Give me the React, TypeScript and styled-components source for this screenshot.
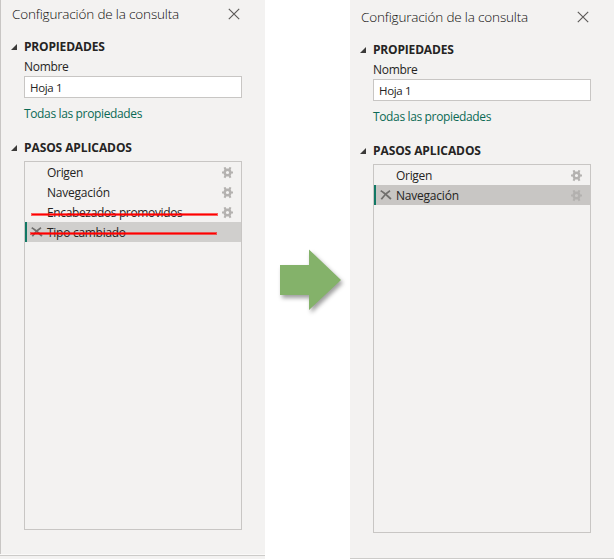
import React from 'react';
import styled, { createGlobalStyle } from 'styled-components';

const GlobalStyle = createGlobalStyle`
  * { box-sizing: border-box; }
  body {
    margin: 0;
    background: #fff;
    font-family: 'Open Sans', 'Noto Sans', sans-serif;
    font-size: 12px;
    color: #252423;
    overflow: hidden;
  }
`;

const Page = styled.main`
  display: grid;
  grid-template-columns: 265px 85px 264px;
  width: 615px;
  height: 559px;
  overflow: hidden;
`;

const PanelColumn = styled.div<{ $outlined?: boolean }>`
  display: flex;
  flex-direction: column;
  height: 559px;
  background: ${p => (p.$outlined ? '#f3f2f1' : '#fff')};
`;

const Panel = styled.section<{ $outlined?: boolean }>`
  height: ${p => (p.$outlined ? 554 : 558)}px;
  padding: ${p => (p.$outlined ? '0 23px 0 23px' : '3px 23px 0 23px')};
  border-left: ${p => (p.$outlined ? '1px solid #c8c6c4' : '0')};
  background: #f3f2f1;
`;

const BottomRule = styled.div<{ $gap?: boolean }>`
  height: ${p => (p.$gap ? 2 : 1)}px;
  border-top: ${p => (p.$gap ? '1px solid #faf9f8' : '0')};
  background: #cccbc9;
`;

const Header = styled.header`
  display: flex;
  align-items: center;
  justify-content: space-between;
  height: 28px;
  margin-left: -12px;
  padding-right: 2px;
`;

const Title = styled.h1`
  margin: 0;
  font-size: 13.5px;
  font-weight: 300;
  line-height: 28px;
  letter-spacing: -0.16px;
  color: #100f0e;
  white-space: nowrap;
`;

const Heading = styled.h2<{ $top: number; $spacing: number }>`
  position: relative;
  margin: ${p => p.$top}px 0 0;
  height: 20px;
  font-size: 12px;
  line-height: 20px;
  font-weight: 700;
  letter-spacing: ${p => p.$spacing}px;
  color: #252423;
  white-space: nowrap;
`;

const Caret = styled.svg`
  position: absolute;
  left: -13px;
  top: 7px;
`;

const Label = styled.label`
  display: block;
  height: 19px;
  line-height: 20px;
  letter-spacing: -0.3px;
`;

const NameField = styled.div`
  height: 22px;
  padding-left: 5px;
  border: 1px solid #c8c6c4;
  background: #fff;
  line-height: 21px;
  font-size: 11.5px;
  letter-spacing: -0.35px;
`;

const AllLink = styled.a`
  display: block;
  height: 20px;
  margin-top: 6px;
  line-height: 20px;
  letter-spacing: -0.36px;
  color: #0b6a55;
`;

const StepList = styled.ul`
  height: 369px;
  margin: 3px 0 0;
  padding: 0;
  border: 1px solid #c8c6c4;
  list-style: none;
`;

const Step = styled.li<{ $fill?: string }>`
  position: relative;
  display: grid;
  grid-template-columns: 20px 1fr 12px;
  align-items: center;
  height: 20px;
  padding-right: 7px;
  border-left: 2px solid ${p => (p.$fill ? '#117865' : 'transparent')};
  background: ${p => p.$fill ?? 'transparent'};
  background-clip: padding-box;
`;

const StepName = styled.span<{ $spacing: number }>`
  height: 20px;
  line-height: 22px;
  letter-spacing: ${p => p.$spacing}px;
  white-space: nowrap;
`;

const Strike = styled.span<{ $left: number; $top: number; $width: number }>`
  position: absolute;
  left: ${p => p.$left}px;
  top: ${p => p.$top}px;
  width: ${p => p.$width}px;
  height: 3px;
  border: 1px solid rgba(255, 0, 0, 0.6);
  background: #f00;
  background-clip: padding-box;
`;

const Middle = styled.div`
  padding: 249px 0 0 15px;
`;

const Arrow = styled.svg`
  display: block;
  overflow: visible;
  filter: drop-shadow(2px 3px 2px rgba(0, 0, 0, 0.38));
`;

const CloseIcon = () => (
  <svg width="12" height="12" viewBox="0 0 12 12" fill="none" stroke="#5c5a58" strokeWidth="1.15">
    <path d="M.8.8 11.2 11.2M11.2.8.8 11.2" />
  </svg>
);

const DeleteIcon = () => (
  <svg width="12" height="10" viewBox="0 0 12 10" fill="none" stroke="#706f6d">
    <path d="M.7.8C4 2.5 7 5.5 11 9" strokeWidth="1.8" />
    <path d="M10 .8C7 2.5 4 5.5 1.3 9.2" strokeWidth="1.8" />
  </svg>
);

const GearIcon = ({ faint }: { faint?: boolean }) => (
  <svg width="12" height="12" viewBox="0 0 12 12" fill="none" stroke={faint ? '#b3b1af' : '#b4b2b0'}>
    <circle cx="5.5" cy="5.5" r="2.8" strokeWidth="2.4" />
    <path d="M0 5.5h2M9 5.5h2M2.5.3l1.2 2.4M8.5.3 7.3 2.7M2.5 10.7l1.2-2.4M8.5 10.7 7.3 8.3" strokeWidth="2.1" />
  </svg>
);

const DeleteCell = styled.span`
  display: flex;
  padding-left: 4px;
`;

const GearCell = styled.span`
  display: flex;
  padding-top: 1px;
`;

interface StepData {
  name: string;
  spacing: number;
  fill?: string;
  gear?: 'normal' | 'faint';
  strike?: { left: number; top: number; width: number };
}

const SectionHeading = ({ text, top, spacing }: { text: string; top: number; spacing: number }) => (
  <Heading $top={top} $spacing={spacing}>
    <Caret width="6" height="6" viewBox="0 0 6 6">
      <path d="M6 0v6H0z" fill="#3b3a39" />
    </Caret>
    {text}
  </Heading>
);

const QueryPanel = ({ steps, outlined }: { steps: StepData[]; outlined?: boolean }) => (
  <PanelColumn $outlined={outlined}>
    <Panel $outlined={outlined}>
      <Header>
        <Title>Configuración de la consulta</Title>
        <CloseIcon />
      </Header>
      <SectionHeading text="PROPIEDADES" top={9} spacing={-0.18} />
      <Label>Nombre</Label>
      <NameField>Hoja 1</NameField>
      <AllLink>Todas las propiedades</AllLink>
      <SectionHeading text="PASOS APLICADOS" top={14} spacing={-0.09} />
      <StepList>
        {steps.map(step => (
          <Step key={step.name} $fill={step.fill}>
            <DeleteCell>{step.fill && <DeleteIcon />}</DeleteCell>
            <StepName $spacing={step.spacing}>{step.name}</StepName>
            <GearCell>{step.gear && <GearIcon faint={step.gear === 'faint'} />}</GearCell>
            {step.strike && (
              <Strike $left={step.strike.left} $top={step.strike.top} $width={step.strike.width} />
            )}
          </Step>
        ))}
      </StepList>
    </Panel>
    <BottomRule $gap={outlined} />
  </PanelColumn>
);

const before: StepData[] = [
  { name: 'Origen', spacing: -0.3, gear: 'normal' },
  { name: 'Navegación', spacing: -0.22, gear: 'normal' },
  { name: 'Encabezados promovidos', spacing: -0.36, gear: 'normal', strike: { left: 4, top: 11, width: 187 } },
  { name: 'Tipo cambiado', spacing: -0.28, fill: '#d0cfcd', strike: { left: 3, top: 10, width: 187 } },
];

const after: StepData[] = [
  { name: 'Origen', spacing: -0.3, gear: 'normal' },
  { name: 'Navegación', spacing: -0.22, gear: 'faint', fill: '#c8c6c4' },
];

export default function App() {
  return (
    <>
      <GlobalStyle />
      <Page>
        <QueryPanel steps={before} outlined />
        <Middle>
          <Arrow width="62" height="62" viewBox="0 0 62 62">
            <path d="M0 16h29V.5L61 31 29 61V46H0z" fill="#84b26a" />
          </Arrow>
        </Middle>
        <QueryPanel steps={after} />
      </Page>
    </>
  );
}
